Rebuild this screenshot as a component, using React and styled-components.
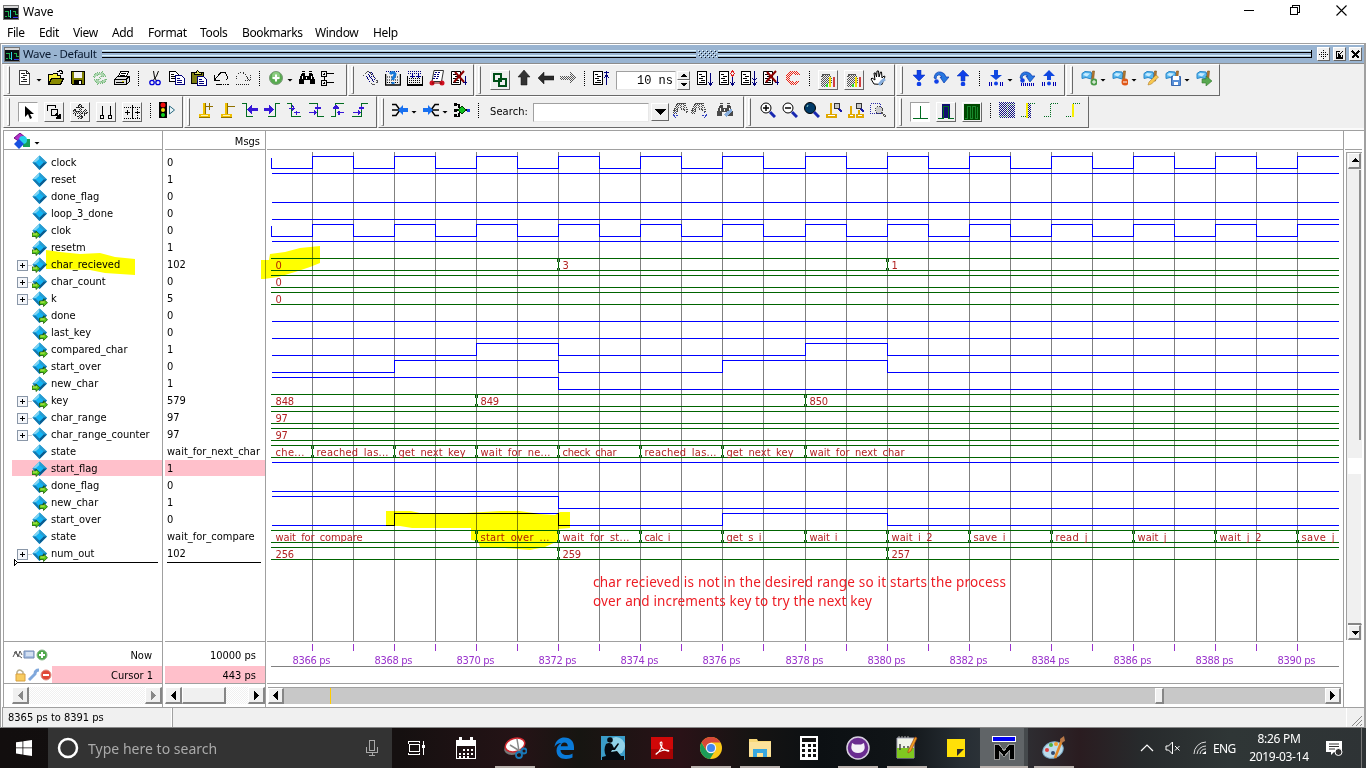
import React from "react";
import styled, { createGlobalStyle, css } from "styled-components";

const Global = createGlobalStyle`
  html, body { margin: 0; padding: 0; }
  body { width: 1366px; height: 768px; overflow: hidden; background: #f0f0f0; }
  *, *::before, *::after { box-sizing: border-box; }
  svg { display: block; flex: none; }
`;
const ui = `"Noto Sans", "Open Sans", sans-serif`;
const tahoma = `"DejaVu Sans Condensed", "DejaVu Sans", sans-serif`;

const Screen = styled.div`
  width: 1366px; height: 768px; display: flex; flex-direction: column; overflow: hidden;
  background: #fff; color: #000; font-family: ${tahoma}; font-stretch: condensed; font-size: 11px; white-space: nowrap;
`;
const Defs = styled.svg`position: absolute;`;
const TitleBar = styled.header`
  height: 23px; display: flex; align-items: center; padding: 0 19px 1px 3px; font: 12px ${ui};
  > svg { margin: 2px 4px 0 0; }
`;
const WinButtons = styled.div`
  margin-left: auto; display: flex; gap: 35px; align-items: center; padding-bottom: 2px;
`;
const MenuBar = styled.nav`
  height: 20px; display: flex; align-items: center; padding: 0 0 2px 7px; font: 12px ${ui};
`;
const MenuItem = styled.span`width: ${(p) => p.$w}px; letter-spacing: -0.35px;`;

const Frame = styled.main`
  height: 685px; display: flex; flex-direction: column; background: #fff;
  border: 1px solid #a0a0a0; border-bottom-color: #888; border-right-width: 2px;
`;
const PaneTitle = styled.div`
  height: 20px; border-top: 1px solid #fff; border-bottom: 1px solid #8c8c8c; margin-left: 1px;
  background: #99b4d1; display: flex; align-items: center; padding: 0 2px; font: 11.5px ${ui}; color: #0a1a30;
`;
const PaneName = styled.span`width: 79px; margin: 0 0 2px 3px; letter-spacing: -0.35px;`;
const Grooves = styled.div`
  flex: 1; height: 8px; margin-right: ${(p) => (p.$end ? 2 : 0)}px; border-right: ${(p) => (p.$end ? 1 : 0)}px solid #000;
  background: linear-gradient(#d9f2fb 0 1px, #a9c4de 1px 2px, #000 2px 3px, transparent 3px 5px, #d9f2fb 5px 6px, #a9c4de 6px 7px, #000 7px 8px);
`;
const GripBox = styled.div`width: 22px; padding-left: 2px;`;
const MiniButton = styled.span`
  width: 13px; height: 14px; margin-left: 3px; display: flex; align-items: center; justify-content: center;
  background: #f0f0f0; border: 1px solid #fff; border-right-color: #666; border-bottom-color: #666;
`;
const Toolbars = styled.div`
  height: 66px; background: #f0f0f0; border-bottom: 2px solid #fbfbfb; padding-left: 2px;
`;
const ToolRow = styled.div`display: flex; height: 32px;`;
const Group = styled.div`
  width: ${(p) => p.$w}px; margin-right: 1px; padding-left: ${(p) => p.$pad || 4}px; display: flex; align-items: center;
  border-left: 1px solid #fff; border-top: 1px solid #fff; border-right: 1px solid #696969; border-bottom: 1px solid #696969;
`;
const Handle = styled.i`
  width: 3px; height: 28px; margin-right: ${(p) => p.$gap}px;
  border-left: 1px solid #fff; border-top: 1px solid #fff; border-right: 1px solid #696969; border-bottom: 1px solid #a0a0a0;
`;
const Tool = styled.span`
  width: 22px; height: 30px; padding-bottom: 4px; display: flex; align-items: center; justify-content: center;
  margin-left: ${(p) => p.$ml || 0}px; flex: none;
`;
const ToolButton = styled.span`
  width: 20px; height: 20px; margin: 0 3px; display: flex; align-items: center; justify-content: center; flex: none;
  background: ${(p) => (p.$down ? "#fff" : "#f0f0f0")};
  border: 1px solid; border-color: ${(p) => (p.$down ? "#a0a0a0 #fff #fff #a0a0a0" : "#fff #696969 #696969 #fff")};
`;
const CaretBox = styled.i`
  width: 9px; height: 3px; flex: none;
  &::before { content: ""; display: block; width: 6px; height: 3px; background: #000; clip-path: polygon(0 0, 100% 0, 50% 100%); }
`;
const HeadCaret = styled(CaretBox)`margin: 4px 0 0 3px;`;
const Dots = styled.i`
  width: 11px; height: 16px; padding-left: 5px; margin-bottom: 2px; flex: none;
  &::before { content: ""; display: block; width: 1px; height: 16px; background: repeating-linear-gradient(#000 0 1px, transparent 1px 2px); }
`;
const Field = styled.div`
  width: ${(p) => p.$w}px; height: 19px; margin-left: 4px; background: #fff; border: 1px solid;
  border-color: #a0a0a0 #e8e8e8 #e8e8e8 #a0a0a0; font: 12px/18px "Liberation Mono", monospace; text-align: right; padding-right: 2px;
`;
const Spinner = styled.div`
  width: 13px; height: 19px; margin: 0 4px 0 1px; display: flex; flex-direction: column;
`;
const SpinHalf = styled.i`
  flex: 1; min-height: 0; overflow: hidden; display: flex; align-items: center; justify-content: center; background: #f0f0f0;
  border: 1px solid #fff; border-right-color: #696969; border-bottom-color: #696969;
`;
const SearchLabel = styled.span`width: 39px; margin: 0 0 2px 6px; letter-spacing: 0.1px;`;
const DropButton = styled.i`
  width: 18px; height: 18px; margin: 0 3px 0 2px; display: flex; align-items: center; justify-content: center;
  background: #f0f0f0; border: 1px solid #fff; border-right-color: #696969; border-bottom-color: #696969;
`;

const Body = styled.div`
  height: 577px; position: relative; display: flex; margin-left: 2px; border-left: 1px solid #a0a0a0; border-top: 1px solid #a0a0a0;
`;
const Column = styled.section`
  width: ${(p) => p.$w}px; display: flex; flex-direction: column; border-right: 1px solid #a0a0a0; margin-right: ${(p) => p.$mr ?? 2}px;
`;
const ColHead = styled.div`
  height: 19px; border-bottom: 1px solid #a0a0a0; display: flex; align-items: center;
  justify-content: ${(p) => (p.$right ? "flex-end" : "flex-start")}; padding: 2px 5px 0 9px;
`;
const List = styled.div`
  height: 492px; padding-top: 4px; border-bottom: 1px solid #a0a0a0;
`;
const WaveBox = styled.div`height: 492px; border-bottom: 1px solid #a0a0a0;`;
const RulerBox = styled.div`height: 42px; border-bottom: 1px solid #a0a0a0;`;
const Row = styled.div`
  height: 17px; display: flex; align-items: center; padding-left: ${(p) => p.$pl}px;
  ${(p) => p.$hot && css`background: linear-gradient(#ffc0cb, #ffc0cb) ${p.$from}px 0 / 200px 16px no-repeat;`}
`;
const Expander = styled.span`
  width: 15px; height: 12px; display: flex; align-items: center; margin-top: 2px;
  &::after { content: ""; flex: 1; height: 1px; background: #d0d0d0; }
`;
const SigName = styled.span`margin-left: 3px; padding-bottom: 1px;`;
const SigValue = styled.span`margin-left: 2px; padding-bottom: 1px;`;
const EndRule = styled.div`
  height: 1px; margin: ${(p) => p.$m}; background: #000; display: flex; align-items: center;
`;
const Foot = styled.div`
  height: 42px; border-bottom: 1px solid #a0a0a0; padding-top: 3px;
`;
const FootRow = styled.div`
  height: 20px; display: flex; align-items: center; padding: 0 ${(p) => p.$pr}px 0 8px;
  span { margin-left: auto; }
  ${(p) => p.$hot && css`background: linear-gradient(#ffc0cb, #ffc0cb) ${p.$from}px 1px / 200px 17px no-repeat;`}
`;
const HBar = styled.div`
  height: 17px; margin: 3px ${(p) => p.$mr || 0}px 0 ${(p) => p.$ml || 0}px; display: flex; align-items: stretch;
  background: ${(p) => p.$track || "conic-gradient(#fff 25%, #f0f0f0 0 50%, #fff 0 75%, #f0f0f0 0) 0 0 / 2px 2px"};
  border-top: ${(p) => (p.$track ? "1px solid #a0a0a0" : "0")};
`;
const ScrollKey = styled.i`
  width: ${(p) => p.$w || 16}px; height: ${(p) => p.$h || "auto"}; flex: none; background: #f0f0f0; border: 1px solid #fff; border-right: 2px solid #868686; border-bottom: 2px solid #868686;
  display: flex; align-items: center; justify-content: center; margin-left: ${(p) => p.$ml || 0};
`;
const Mark = styled.i`width: 1px; flex: none; background: #ffcc00; margin-left: 46px;`;
const VTrack = styled.div`
  width: 16px; height: 488px; margin: 2px 0 0 1px; display: flex; flex-direction: column; border-left: 1px solid #a0a0a0; border-top: 1px solid #a0a0a0;
  background: #f0f0f0; padding-left: 1px;
`;
const VFace = styled.i`
  height: ${(p) => p.$h}px; margin-top: ${(p) => p.$mt || 0}px; width: 13px; background: #f0f0f0; border-right: ${(p) => (p.$edge ? 2 : 0)}px solid #909090;
`;
const VNotch = styled.i`height: 16px; background: #fff;`;
const VFill = styled.i`flex: 1; background: #f0f0f0; border-bottom: 2px solid #868686; border-right: 1px solid #fff;`;
const Overlay = styled.svg`position: absolute; left: 0; top: 0; mix-blend-mode: multiply; pointer-events: none;`;
const Status = styled.footer`
  height: 20px; margin: 0 0 0 1px; background: #f0f0f0; border-top: 1px solid #a0a0a0; display: flex; align-items: stretch;
`;
const StatusCell = styled.div`
  width: ${(p) => p.$w}px; flex: none; padding-left: 5px; display: flex; align-items: center; border-left: 1px solid #a0a0a0; border-right: 1px solid #fff;
`;
const SizeGrip = styled.div`flex: 1; display: flex; align-items: flex-end; justify-content: flex-end; padding: 0 2px 1px 0;`;

const Taskbar = styled.footer`
  height: 40px; display: flex; align-items: stretch; color: #fff; margin-top: auto;
  background: linear-gradient(90deg, #120e0e 0, #151010 400px, #251316 520px, #161511 580px, #2a1217 680px, #161413 750px, #0c1013 820px, #101417 900px, #262d33 960px, #30363b 1000px, #2a1c20 1080px, #272a2c 1140px, #2f3636 1230px, #2e3335 1366px);
`;
const Start = styled.div`width: 48px; display: flex; align-items: center; justify-content: center;`;
const SearchBox = styled.div`
  width: 344px; background: #333; display: flex; align-items: center; padding: 0 14px 0 9px; font: 14px ${ui}; color: #aaa;
  span { margin-left: 9px; letter-spacing: 0.02px; } svg:last-child { margin-left: auto; }
`;
const TaskItem = styled.div`
  width: 49px; display: flex; align-items: center; justify-content: center; position: relative; flex: none;
  background: ${(p) => (p.$active ? "linear-gradient(90deg, #606467 44px, #45494c 44px)" : "none")};
  background-size: 48px 100%; background-repeat: no-repeat; padding-right: ${(p) => (p.$active ? 2 : 0)}px;
  &::after { content: ""; display: ${(p) => (p.$open ? "block" : "none")}; position: absolute; left: ${(p) => (p.$active ? 0 : 5)}px; width: ${(p) => (p.$active ? 48 : 40)}px; bottom: 0; height: 2px; background: #b8b0ac; }
`;
const Tray = styled.div`
  margin-left: auto; display: flex; align-items: center; font: 12px ${ui};
  > svg:first-child { margin-right: 3px; }
`;
const Lang = styled.span`width: 36px; margin-left: 7px; letter-spacing: -0.6px;`;
const Clock = styled.div`width: 60px; text-align: center; line-height: 18px; letter-spacing: -0.3px;`;
const Notes = styled.span`margin-left: 17px;`;
const PeekEdge = styled.i`width: 5px; height: 40px; margin-left: 18px; border-left: 1px solid #777;`;

/* ---------- icons ---------- */
const G = "#006c20", N = "#00007a";
const Svg = ({ w = 16, h = 16, vb, children, smooth }) => (
  <svg width={w} height={h} viewBox={vb || `0 0 ${w} ${h}`} fill="none" shapeRendering={smooth ? "auto" : "crispEdges"}>{children}</svg>
);
const page = <><path d="M2.500 .5h7l3 3v11h-10z" fill="#fff" stroke="#444" /><path d="M9.500 .5v3h3M4 3.500h4M6 5.500h4M4 7.500h4M6 9.500h4M4 11.500h6" stroke="#222" /></>;
const pageSmall = <><path d="M.5 1.500h9v13h-9z" fill="#fff" stroke="#000" /><path d="M2 4.500h3M4 6.500h4M2 8.500h4M4 10.500h4M2 12.500h6" stroke="#000" /></>;
const flag = <g><path d="M1 3.500l3-2 6 .5 1 3-1 4-5-1.500-4 1z" fill="#58b8f0" stroke="#2a86c8" /><path d="M2 5l2-2 5 .5-3 3z" fill="#c8ecff" /><path d="M11.500 1h2l-1 10h-2z" fill="#b87a30" stroke="#7a5018" strokeWidth=".6" /></g>;
const lens = (x = 0) => <g transform={`translate(${x} 0)`}><circle cx="9" cy="4" r="3" fill="#c8c8c8" stroke="#333" /><path d="M11 7l3 3" stroke="#1818a8" strokeWidth="2" /></g>;
const bars = <><path d="M1 6h7v9H1z" fill="url(#grey)" /><path d="M1 5l2-3h6l2 3v5H8V6H2z" fill="url(#grey)" stroke="#555" strokeDasharray="1 1" /><path d="M10 15V5" stroke="#f0e000" strokeWidth="2" /><path d="M13.500 15V5" stroke="#d04040" strokeWidth="2" /><path d="M7 15V12" stroke="#30e030" strokeWidth="2" /></>;
const bino = (c) => <><path d="M3 4h3v3h4V4h3l3 7v4h-5v-4H5v4H0v-4z" fill={c} transform="translate(0 -1)" /><path d="M3 1.500h3M10 1.500h3" stroke={c} /><path d="M3 6v3M12 6v3M7.500 7v2" stroke="#fff" /></>;
const greyBino = <><path d="M4 1h8l3 9h-3l-1-3H5l-1 4H0z" fill="url(#grey)" stroke="#444" strokeDasharray="1 1" /><path d="M6 3v6M9 3v6M12 4v5" stroke="#e8e8e8" /></>;
const cross = <path d="M4 2l9 10M13 1L3 12" stroke="#8c0000" strokeWidth="2" />;

const icons = {
  doc: page,
  folder: <><path d="M.5 14V4.500h4l1-1h4v2h3v3" fill="#f8f040" stroke="#000" /><path d="M.5 14.500l3-6h12l-3 6z" fill="#8a8a00" stroke="#000" /><path d="M9 1.500h2l1-1h1l1.500 2M14.500 .5v3h-3" stroke="#000" /></>,
  save: <><path d="M1.500 1.500h13v13h-12l-1-1z" fill="#808000" stroke="#000" /><path d="M4 2h8v6H4z" fill="#f4f4f4" /><path d="M4 10h8v4H4z" fill="#000" /><path d="M9 11h2v3H9z" fill="#fff" /></>,
  refresh: <g opacity=".8"><path d="M1 7q2-5 8-4l1-2 4 5-6 1 1-2q-4-1-5 2z" fill="#9cd0a0" stroke="#5aaa60" strokeDasharray="1 1" /><path d="M15 9q-2 5-8 4l-1 2-4-5 6-1-1 2q4 1 5-2z" fill="#9cd0a0" stroke="#5aaa60" strokeDasharray="1 1" /></g>,
  print: <><path d="M4.500 6.500l2-5h8l-2 5z" fill="#fff" stroke="#000" /><path d="M7 3.500h5M6 5.500h5" stroke="#000" /><path d="M.5 9.500l3-3h12v5l-3 3H.5z" fill="#ddd" stroke="#000" /><path d="M1 9.500h11v5M12 9.500l3-3M2 12.500h8" stroke="#000" /><path d="M8 11.500h2" stroke="#d8d000" /></>,
  cut: <><path d="M6.500 1l1 6 2 4M11.500 1l-2 5-3 4" stroke="#000" /><circle cx="5" cy="12.500" r="2.200" stroke="#0000d8" strokeWidth="1.300" /><circle cx="11" cy="12.500" r="2.200" stroke="#0000d8" strokeWidth="1.300" /></>,
  copy: <><path d="M.5 1.500h6l3 3v7h-9z" fill="#fff" stroke="#000" /><path d="M2 4.500h3M2 6.500h5M2 8.500h5" stroke="#000" /><path d="M6.500 5.500h6l3 3v6h-9z" fill="#fff" stroke={N} /><path d="M8 8.500h3M8 10.500h5M8 12.500h5" stroke={N} /></>,
  paste: <><path d="M.5 2.500h12v11H.5z" fill="#7c7c10" stroke="#000" /><path d="M3.500 4V2h2l1-1.500L8 2h2v2z" fill="#e0e060" stroke="#000" /><path d="M6.500 6.500h6l3 3v6h-9z" fill="#fff" stroke={N} /><path d="M8 9.500h3M8 11.500h5M8 13.500h5" stroke={N} /></>,
  undo: <><path d="M1 5v5.500h5.500M1.500 10L6 4.500q3-4 6.500-1.500 3 3 1 7.500" stroke="#000" /><path d="M3 14.500h13" stroke="#000" strokeDasharray="6 1 1 1 1 1" /></>,
  redo: <><path d="M15 5v5.500H9.500M14 10L10 4.500q-3-4-6.500-1.500-3 3-1 7.500" stroke="#333" strokeDasharray="1 1" /><path d="M1 14.500h14" stroke="#222" strokeDasharray="1 1" /></>,
  plus: <><circle cx="8" cy="8" r="6.500" fill="#58aa50" stroke="#7a9a78" /><circle cx="8" cy="6" r="4" fill="#8ccc80" /><path d="M8 4.500v7M4.500 8h7" stroke="#fff" strokeWidth="2" /></>,
  bino: bino("#000"),
  tree: <><path d="M.5 1.500h5v5h-5zM.5 10.500h5v5h-5zM3.500 6.500v4M6 3.500h7M6 12.500h7" stroke="#000" /><path d="M2 4h2M3 3v2M2 13h2M3 12v2" stroke="#000" /></>,
  log: <><path d="M0 6l5-5 5 4M10 5l5 7-5 3-4-4" stroke="#555" strokeDasharray="2 1" /><path d="M3 6l5 7M5 4l3 4M8 8l4 5M6 2l4 1-4 4 5-1 1 5" stroke={N} strokeDasharray="1 1" /></>,
  question: <><path d="M.5 4v11h15V4M1 15h15" stroke="#000" strokeWidth="1.500" /><path d="M2 7h12M2 10h12M2 12.500h12" stroke="#000" strokeDasharray="1 1" /><path d="M1 1.500h14" stroke={N} strokeDasharray="1 1" /><path d="M5 4q3-3 5 0 0 2-2 4v2M8 12v2" stroke="#1878d8" strokeWidth="3" /></>,
  down: <><path d="M.5 6v9h15V6" stroke="#000" strokeWidth="1.500" /><path d="M2 8.500h12M2 10.500h12M2 12.500h12" stroke="#000" strokeDasharray="1 1" /><path d="M1 1.500h14M1 3.500h14" stroke={N} strokeDasharray="1 1" /><path d="M5 3v5M11 3v5M3 6h5M9 6h5" stroke="#000090" /></>,
  chart: <><path d="M5 .5h9.500l-2 11H3z" fill="#fff" stroke="#333" /><path d="M6 2.500h6M5 4.500h6M5 6.500h6M4 8.500h6" stroke={N} strokeDasharray="2 1" /><circle cx="3" cy="13" r="2.500" fill="#d01020" /><circle cx="13" cy="13" r="2.500" fill="#d01020" /><path d="M3 13h10" stroke="#800" /></>,
  pageX: <>{pageSmall}<path d="M14.500 6v9M12 12.500h5" stroke={N} />{cross}</>,
  link: <path d="M2 2h7v7H2zM7 7h7v7H7z" stroke="#005018" strokeWidth="2" />,
  up: <path d="M8 0l6 7h-3v8H5V7H2z" fill="#333" stroke="#111" strokeWidth=".5" />,
  left: <path d="M0 8l6-6v4h10v4H6v4z" fill="#2a2a2a" stroke="#111" strokeWidth=".5" />,
  rightDim: <path d="M16 8l-6-6v4H0v4h10v4z" fill="url(#grey)" />,
  pageUp: <>{pageSmall}<path d="M13.500 1v14M11 2h5M11 8l2.500-3 2.500 3" stroke={N} /></>,
  pageDown: <>{pageSmall}<path d="M13.500 3v12M11 12l2.500 3 2.500-3" stroke={N} /></>,
  pageRed: <>{pageSmall}<path d="M13.500 5v10M11 12l2.500 3 2.500-3" stroke={N} /><path d="M13.500 1l2 2.500-2 2.500-2-2.500z" stroke="#e02020" /></>,
  pageAll: <>{pageSmall}<path d="M13.500 1v14M11 8l2.500 2 2.500-2M11 12l2.500 3 2.500-3" stroke={N} /></>,
  stop: <path d="M12 1l3 4h-4L9 4 6 5 5 8l1 3 3 1 2-1h4l-3 4H5l-4-4V5l4-4z" fill="url(#red)" />,
  bars,
  hand: <><path d="M4 14L1 9l1-1 3 2-1-7h1.500l1 4 .5-6h1.500l.5 6 1.500-5h1L12 8l2-2 1 .5-3 8z" fill="#fff" stroke="#000" /><path d="M9 15l3-4 3-2" stroke="#88aedc" strokeWidth="3" /></>,
  stepIn: <><path d="M6 0h4v5h4L8 11 2 5h4z" fill="#1040e8" stroke="#0830b0" strokeWidth=".5" /><circle cx="8" cy="14" r="2.300" fill="#1040e8" /></>,
  stepOver: <><path d="M1 8q1-7 7-6 4 1 5 5h3l-5 6-4-6h2Q7 4 5 5 3 6 3 9z" fill="#2878e0" stroke="#0838b0" strokeWidth=".7" /><circle cx="3.500" cy="11.500" r="2.300" fill="#1040e8" /></>,
  stepOut: <><path d="M6 11h4V6h4L8 0 2 6h4z" fill="#1040e8" stroke="#0830b0" strokeWidth=".5" /><circle cx="8" cy="14" r="2.300" fill="#1040e8" /></>,
  stepIn2: <><path d="M6 0h4v5h4L8 10 2 5h4z" fill="#1048e0" /><circle cx="8" cy="13.500" r="2" fill="#1040e8" /><path d="M1.500 12v4M3.500 12v4M12.500 12v4M14.500 12v4" stroke="#0000b0" /></>,
  stepOver2: <><path d="M1 8q1-7 7-6 4 1 5 4h3l-5 6-4-6h2Q7 4 5 5 3 6 3 9z" fill="#2878e0" stroke="#0838b0" strokeWidth=".7" /><circle cx="3.500" cy="10.500" r="2.300" fill="#1040e8" /><path d="M2 14.500h14" stroke="#0000b0" strokeWidth="3" strokeDasharray="1 1" /></>,
  stepOut2: <><path d="M6 10h4V6h4L8 0 2 6h4z" fill="#1048e0" /><circle cx="8" cy="13.500" r="2" fill="#1040e8" /><path d="M1.500 12v4M3.500 12v4M12.500 12v4M14.500 12v4" stroke="#0000b0" /></>,
  flagAdd: <>{flag}<circle cx="13" cy="12" r="3.500" fill="#4a9a48" /><path d="M13 10v4M11 12h4" stroke="#fff" /></>,
  flagDel: <>{flag}<circle cx="13" cy="12" r="3.500" fill="#e05818" /><path d="M11 12h4" stroke="#fff" /></>,
  flagEdit: <>{flag}<path d="M5 15l1-3 7-7 2.500 2-7 7z" fill="#f8c850" stroke="#b08030" strokeWidth=".6" /></>,
  flagSave: <>{flag}<path d="M6.500 6.500h9v9h-9z" fill="#5890d8" stroke="#3868b0" /><path d="M8 6h6v4H8zM9 12h4v3H9z" fill="#fff" /></>,
  flagGo: <>{flag}<path d="M6 9h4V6l6 5-6 5v-3H6z" fill="#58a850" stroke="#387830" strokeWidth=".6" /></>,
  pointer: <path d="M5 2v11l3-3 2 5 2-1-2-4h4z" fill="#000" />,
  edit: <><path d="M1.500 7V1.500h8V4" stroke="#000" strokeWidth="1.500" /><path d="M5.500 5.500h6v6h-6zM10 10l4 4M14 10v4h-4" stroke="#000" strokeWidth="1.500" /></>,
  move: <path d="M8 0l3 3.500H9v3.500h3.500V5L16 8l-3.500 3V9H9v3.500h2L8 16l-3-3.500h2V9H3.500v2L0 8l3.500-3v2H7V3.500H5z" fill="url(#grey)" stroke="#222" strokeDasharray="1 1" />,
  cursors: <path d="M4.500 2v9M12.500 2v9M2.500 11.500h3v3h-3zM10.500 11.500h3v3h-3z" stroke="#000" />,
  stretch: <><path d="M8.500 1v14" stroke="#000" /><path d="M0 3.500h8M0 14.500h8M9 3.500h7M9 14.500h7M13.500 3v12" stroke="#000" strokeDasharray="1 1" /><path d="M1 8.500h5M3.500 6v5M11 8.500h5" stroke="#000" /></>,
  traffic: <><path d="M0 0h8v16H0z" fill="#000" /><circle cx="4" cy="3" r="2.500" fill="#f01010" /><circle cx="4" cy="8" r="2" fill="#f0e010" /><circle cx="4" cy="13" r="2" fill="#10d020" /><path d="M10.500 4v8l5-4z" stroke="#2a6a80" fill="#e8f4f8" /></>,
  curAdd: <><path d="M5 1h2v11h5v4H1v-4h4z" fill="#f0c000" /><path d="M3 13h7v1H3z" fill="#fff4b0" /><path d="M7.500 1v11M1 15.500h11" stroke="#907000" /><path d="M8 4.500h7M11.500 1v7" stroke="#907000" /></>,
  curDel: <><path d="M5 1h2v11h5v4H1v-4h4z" fill="#f0c000" /><path d="M3 13h7v1H3z" fill="#fff4b0" /><path d="M7.500 1v11M1 15.500h11" stroke="#907000" /><path d="M8 4.500h7" stroke="#907000" /></>,
  ePrev: <><path d="M0 1.500h4.500v13H11" stroke={G} /><path d="M5 7.500l5-4.500v3h6v3h-6v3z" fill="#3818d8" /></>,
  eNext: <><path d="M4 14.500h7.500V1.500H16" stroke={G} /><path d="M10 7.500L5 3v3H0v3h5v3z" fill="#3818d8" /></>,
  fPrev: <><path d="M1 1.500h4.500v13H15" stroke={G} /><path d="M3 6h6M6 3l2 3-2 3M8 10.500h6M10 8.500v4" stroke="#3818d8" /></>,
  fNext: <><path d="M1 1.500h8.500v13H16" stroke={G} /><path d="M1 10.500h7M6 8l2 2.500-2 2.500M9.500 3v5M7 6h6" stroke="#3818d8" strokeWidth="1.200" /></>,
  rPrev: <><path d="M1 14.500h4.500V1.500H14" stroke={G} /><path d="M3 6h6M4 6l2-3 2 3M7 10.500h7M9 8.500v4" stroke="#3818d8" strokeWidth="1.200" /></>,
  rNext: <><path d="M0 14.500h9.500V1.500H16" stroke={G} /><path d="M1 10.500h7M6 8l2 2.500-2 2.500M7 6h5M9.500 4v4" stroke="#3818d8" strokeWidth="1.200" /></>,
  merge: <><path d="M0 2.500h4l4 5.500-4 5.500H0M0 8h8" stroke="#000" strokeWidth="1.500" /><path d="M6 8l5-5v3h5v4h-5v3z" fill="#1870f0" /></>,
  split: <><path d="M16 2.500h-4L8 8l4 5.500h4M8 8h8" stroke="#000" strokeWidth="1.500" /><path d="M10 8L5 3v3H0v4h5v3z" fill="#1870f0" /></>,
  node: <><path d="M1 2.500h4v3l3 3-3 3v3H1M1 8h5M8 8h7" stroke="#000" strokeWidth="1.200" /><path d="M0 1h3v3H0zM0 6.500h3v3H0zM0 12h3v3H0z" fill="#000" /><path d="M8 4l4 4-4 4-4-4z" fill="#10c020" stroke="#003800" /><path d="M13 6.500h3v3h-3z" fill="#2040e0" /></>,
  findPrev: <>{greyBino}<path d="M0 13h5M3 10l-3 3 3 3" stroke="#3040c0" strokeDasharray="2 1" /></>,
  findNext: <>{greyBino}<path d="M11 13h5M13 10l3 3-3 3" stroke="#3040c0" strokeDasharray="2 1" /></>,
  findOpt: <>{bino("#4a4a4a")}<path d="M8 14l4-4 3-2" stroke="#88aedc" strokeWidth="3" /></>,
  zoomIn: <><circle cx="6" cy="6" r="5" fill="#fff" stroke="#000" /><path d="M3 6h6M6 3v6" stroke="#000" strokeWidth="1.500" /><path d="M10 10l5 5" stroke="#1828b0" strokeWidth="3" /></>,
  zoomOut: <><circle cx="6" cy="6" r="5" fill="#fff" stroke="#000" /><path d="M3 6h6" stroke="#000" strokeWidth="1.500" /><path d="M10 10l5 5" stroke="#1828b0" strokeWidth="3" /></>,
  zoomFull: <><circle cx="6" cy="6" r="5.500" fill="#003a68" stroke="#000" /><path d="M4 3l-1 2" stroke="#8cc" /><path d="M10 10l5 5" stroke="#1828b0" strokeWidth="3" /></>,
  zoomCur: <><path d="M4 1h2v11h5v4H0v-4h4z" fill="#e0a800" /><path d="M2 13.500h7" stroke="#fff" />{lens(2)}</>,
  zoomTwo: <><path d="M2 4h2v8h3v4H0v-4h2zM10 8h2v4h4v4H8v-4h2z" fill="#e0a800" /><path d="M2 13.500h3M10 13.500h4" stroke="#fff" />{lens(2)}</>,
  zoomArea: <><path d="M.5 1.500h10v10H.5z" stroke="#2828a8" strokeDasharray="1 1" /><circle cx="9" cy="8" r="3.500" fill="#ccc" stroke="#444" strokeDasharray="1 1" /><path d="M12 11l4 4" stroke="#555" strokeWidth="2" strokeDasharray="1 1" /></>,
  wOne: <path d="M1 14.500h15M8.500 14V2" stroke={G} />,
  wTwo: <><path d="M4 0h8v14H4z" fill="#101070" /><path d="M0 14.500h5.500V2.500h5v12H16" stroke={G} /></>,
  wThree: <><path d="M0 0h16v16H0z" fill="#004800" /><path d="M1 14.500h2.500V2.500h3v12h2V2.500h3v12h2V2.500" stroke="#18882c" /></>,
  hatch: <><rect width="16" height="16" fill="url(#chk)" /><path d="M0 14.500h8V2h8" stroke="#408060" strokeDasharray="1 1" /></>,
  hatchY: <><rect x="6" y="1" width="4" height="15" fill="url(#chk)" /><path d="M5.500 1v15" stroke="#f8f000" strokeWidth="2" /><path d="M0 14.500h5M9 1.500h6" stroke={G} strokeDasharray="1 1" /></>,
  edgeG: <path d="M1 14.500h6.500V1.500H15" stroke={G} strokeDasharray="1 1" />,
  edgeY: <><path d="M7.500 2v13" stroke="#f8f000" strokeWidth="2" /><path d="M1 14.500h6M8 1.500h7" stroke={G} strokeDasharray="1 1" /></>,
};
const smoothSet = new Set(["plus", "up", "left", "stepIn", "stepOver", "stepOut", "stepIn2", "stepOver2", "stepOut2", "flagAdd", "flagDel", "flagEdit", "flagSave", "flagGo", "hand", "question", "cut", "traffic", "merge", "split", "zoomIn", "zoomOut", "zoomFull", "pageX", "chart", "pointer"]);
const Ic = ({ n }) => <Svg smooth={smoothSet.has(n)}>{icons[n]}</Svg>;

/* "v" is a menu caret, "|" a dotted divider, "[x" a raised button, "(x" a pressed one */
const Items = ({ list }) => list.split(" ").map((t, i) => {
  if (t === "v") return <CaretBox key={i} />;
  if (t === "|") return <Dots key={i} />;
  if (t[0] === "[" || t[0] === "(") return <ToolButton key={i} $down={t[0] === "("}><Ic n={t.slice(1)} /></ToolButton>;
  return <Tool key={i}><Ic n={t} /></Tool>;
});

const AppIcon = () => (
  <Svg w={16} h={15}>
    <path d="M.5 .5h15v14H.5z" fill="#0a0f14" stroke="#777" /><path d="M1 1h14v2H1z" fill="#d8d8d8" />
    <path d="M2 6.500h3v5h3M2 11.500h2M10 6.500h2v3h3" stroke="#20b050" /><path d="M7.500 5v8" stroke="#30d8e8" /><path d="M10 12.500h5" stroke="#3838f0" />
  </Svg>
);
const Tri = ({ d, c = "#000", s = 9 }) => (
  <Svg w={s} h={s} vb="0 0 9 9"><path d={{ l: "M7 0v9L2 4.500z", r: "M2 0v9l5-4.500z", u: "M1 6h8L5 2z", d: "M1 3h8L5 7z" }[d]} fill={c} /></Svg>
);
const Diamond = ({ dir }) => (
  <Svg w={16} h={16} smooth>
    <path d="M7.500 .5L15 7.500 7.500 15 .5 7.500z" fill="#18a0dc" />
    <path d="M7.500 .5L.5 7.500h3.500l3.500-3.500z" fill="#7ed4f4" /><path d="M7.500 .5L15 7.500h-3.500L7.500 4z" fill="#2a9cd0" />
    <path d="M15 7.500L7.500 15v-3.500l4-4z" fill="#0a5c90" /><path d="M.5 7.500L7.500 15v-3.500L4 7.500z" fill="#1478b0" />
    <path d="M7.500 4L11.500 7.500l-4 4-4-4z" fill="#12b4f4" />
    {dir && <g transform={dir === "in" ? "translate(0 0)" : "translate(7.500 0)"}><path d="M0 10h4V8l4 3.700-4 3.800v-2H0z" fill="#58c818" stroke="#1c5c08" strokeWidth=".8" /><path d="M1 11h4" stroke="#d8f060" /></g>}
  </Svg>
);
const PlusBox = () => (
  <Svg w={11} h={11}><rect x=".5" y=".5" width="10" height="10" rx="1" fill="#f4f6fa" stroke="#8a97a8" /><path d="M3 5.500h5M5.500 3v5" stroke="#000" /></Svg>
);

/* ---------- signals ---------- */
const LO = 0, HI = 1;
const signals = [
  ["clock", "0", "", 0, "clk"],
  ["reset", "1", "", 0, [[271, HI]]],
  ["done_flag", "0", "", 0, [[271, LO]]],
  ["loop_3_done", "0", "", 0, [[271, LO]]],
  ["clok", "0", "in", 0, "clk"],
  ["resetm", "1", "in", 0, [[271, HI]]],
  ["char_recieved", "102", "in", 1, [[271, "0"], [558, "3"], [887, "1"]]],
  ["char_count", "0", "in", 1, [[271, "0"]]],
  ["k", "5", "out", 1, [[271, "0"]]],
  ["done", "0", "out", 0, [[271, LO]]],
  ["last_key", "0", "out", 0, [[271, LO]]],
  ["compared_char", "1", "out", 0, [[271, LO], [476, HI], [558, LO], [805, HI], [887, LO]]],
  ["start_over", "0", "out", 0, [[271, LO], [394, HI], [558, LO], [722, HI], [887, LO]]],
  ["new_char", "1", "in", 0, [[271, HI], [558, LO]]],
  ["key", "579", "out", 1, [[271, "848"], [476, "849"], [805, "850"]]],
  ["char_range", "97", "", 1, [[271, "97"]]],
  ["char_range_counter", "97", "", 1, [[271, "97"]]],
  ["state", "wait_for_next_char", "", 0, [[271, "che...", 29], [312, "reached las...", 72], [394, "get next key", 67], [476, "wait for ne...", 70], [558, "check char", 54], [640, "reached las...", 72], [722, "get next key", 67], [805, "wait for next char", 95]]],
  ["start_flag", "1", "in", 0, [[271, HI]]],
  ["done_flag", "0", "out", 0, [[271, LO]]],
  ["new_char", "1", "out", 0, [[271, HI], [558, LO]]],
  ["start_over", "0", "in", 0, [[271, LO], [394, HI], [558, LO], [722, HI], [887, LO]]],
  ["state", "wait_for_compare", "", 0, [[271, "wait for compare", 87], [476, "start over ...", 69], [558, "wait for st...", 67], [640, "calc i", 26], [722, "get s i", 35], [805, "wait i", 28], [887, "wait i 2", 41], [969, "save i", 32], [1051, "read j", 32], [1133, "wait j", 29], [1215, "wait j 2", 42], [1297, "save j", 33]]],
  ["num_out", "102", "out", 1, [[271, "256"], [558, "259"], [887, "257"]]],
];
const grid = Array.from({ length: 25 }, (_, n) => 312 + 41 * n + (n > 11 ? 1 : 0));
const END = 1339, OX = 267, OY = 150;
const clk = [[271, LO], ...grid.map((x, n) => [x, n % 2 ? LO : HI])];
const chartFont = { fontFamily: "DejaVu Sans Condensed, DejaVu Sans", fontSize: "11" };

const Trace = ({ i, w }) => {
  const hi = 156.5 + 17 * i, lo = hi + 12;
  const steps = w === "clk" ? clk : w;
  if (typeof steps[0][1] === "string") {
    return (
      <g>
        <path d={`M271 ${hi}H${END}M271 ${lo}H${END}`} stroke="#006400" />
        {steps.slice(1).map(([x]) => (
          <path key={x} stroke="#006400" d={`M${x - 0.5} ${hi}v3M${x - 0.5} ${lo}v-3M${x + 1.5} ${hi}v3M${x + 1.5} ${lo}v-3M${x + 0.5} ${hi + 3}v6`} />
        ))}
        {steps.map(([x, s, len]) => (
          <text key={x} x={x + 4.5} y={lo - 1.5} fill="#b22222" wordSpacing="2.200" textLength={len || s.length * 6.2} lengthAdjust="spacing">{s}</text>
        ))}
      </g>
    );
  }
  const y = (v) => (v ? hi : lo);
  let d = w === "clk" ? `M271.500 ${hi + 1}V${lo}` : `M272 ${y(steps[0][1])}`;
  steps.slice(1).forEach(([x, v]) => { d += `H${x + 0.5}V${y(v)}`; });
  return <path d={d + `H${END}`} stroke="#0000ff" />;
};

const Wave = () => (
  <svg width={1076} height={491} viewBox={`${OX} ${OY} 1076 491`} fill="none" shapeRendering="crispEdges" {...chartFont}>
    <path d={grid.map((x) => `M${x + 0.5} 152V641`).join("")} stroke="#808080" />
    {signals.map((s, i) => <Trace key={i} i={i} w={s[4]} />)}
    <g fill="#ed1c24" fontFamily="Noto Sans, Open Sans" fontSize="13.500">
      <text x="593" y="587" textLength="413">char recieved is not in the desired range so it starts the process</text>
      <text x="593" y="606" textLength="279">over and increments key to try the next key</text>
    </g>
  </svg>
);
const Ruler = () => (
  <svg width={1076} height={41} viewBox="267 642 1076 41" fill="none" shapeRendering="crispEdges" {...chartFont}>
    <path d={grid.map((x) => `M${x + 0.5} 644v7`).join("")} stroke="#9932cc" />
    <path d="M271 666.500H1339" stroke="#808080" />
    {grid.filter((_, n) => n % 2 === 0).map((x, k) => (
      <text key={x} x={x - 19.5} y="664" fill="#9932cc" textLength="38">{8366 + 2 * k} ps</text>
    ))}
  </svg>
);

export default function App() {
  return (
    <Screen>
      <Global />
      <Defs width="0" height="0">
        <defs>
          <pattern id="chk" width="2" height="2" patternUnits="userSpaceOnUse"><path d="M0 0h1v1H0zM1 1h1v1H1z" fill="#101080" shapeRendering="crispEdges" /></pattern>
          <pattern id="grey" width="2" height="2" patternUnits="userSpaceOnUse"><path d="M0 0h1v1H0zM1 1h1v1H1z" fill="#555" shapeRendering="crispEdges" /></pattern>
          <pattern id="red" width="2" height="2" patternUnits="userSpaceOnUse"><path d="M0 0h1v1H0zM1 1h1v1H1z" fill="#f02010" shapeRendering="crispEdges" /></pattern>
          <pattern id="grip" width="4" height="4" patternUnits="userSpaceOnUse"><path d="M0 0h1v1H0zM2 2h1v1H2z" fill="#e4f6fc" /><path d="M1 1h1v1H1zM3 3h1v1H3z" fill="#101820" /></pattern>
        </defs>
      </Defs>
      <TitleBar>
        <AppIcon /><span>Wave</span>
        <WinButtons>
          <Svg w={11} h={11}><path d="M0 5.500h10" stroke="#000" /></Svg>
          <Svg w={11} h={11}><path d="M.5 2.500h7v7h-7zM2.500 2V.5h7v7H8" stroke="#000" /></Svg>
          <Svg w={11} h={11} smooth><path d="M.5 .5l10 10M10.500 .5l-10 10" stroke="#000" strokeWidth="1.100" /></Svg>
        </WinButtons>
      </TitleBar>
      <MenuBar>
        {[["File", 32], ["Edit", 34], ["View", 39], ["Add", 36], ["Format", 52], ["Tools", 42], ["Bookmarks", 73], ["Window", 58], ["Help", 40]].map(([t, w]) => <MenuItem key={t} $w={w}>{t}</MenuItem>)}
      </MenuBar>
      <Frame>
        <PaneTitle>
          <AppIcon /><PaneName>Wave - Default</PaneName>
          <Grooves /><GripBox><Svg w={19} h={8}><rect width="19" height="8" fill="url(#grip)" /></Svg></GripBox><Grooves $end />
          <MiniButton><Svg w={9} h={9}><path d="M4.500 0v9M0 4.500h9M2.500 2v5M6.500 2v5" stroke="#000" strokeDasharray="1 1" /></Svg></MiniButton>
          <MiniButton><Svg w={9} h={9}><path d="M1 1.500h4M1.500 1v7h6V5M8 1L4 5M3.500 3v3H6" stroke="#000" strokeWidth="1.300" /></Svg></MiniButton>
          <MiniButton><Svg w={9} h={9}><path d="M1 1l7 7M8 1L1 8" stroke="#000" strokeWidth="1.600" /></Svg></MiniButton>
        </PaneTitle>
        <Toolbars>
          <ToolRow>
            <Group $w={344} $pad={3}><Handle $gap={4} /><Items list="doc v folder save refresh print | cut copy paste undo redo | plus v bino tree" /></Group>
            <Group $w={126} $pad={2}><Handle $gap={6} /><Items list="log question down chart pageX" /></Group>
            <Group $w={420} $pad={2}><Handle $gap={6} /><Items list="[link up left rightDim | pageUp" />
              <Field $w={60}>10 ns</Field>
              <Spinner><SpinHalf><Tri d="u" s={7} /></SpinHalf><SpinHalf><Tri d="d" s={7} /></SpinHalf></Spinner>
              <Items list="pageDown pageRed pageAll pageX stop | [bars [bars hand" />
            </Group>
            <Group $w={169} $pad={3}><Handle $gap={5} /><Items list="stepIn stepOver stepOut | stepIn2 v stepOver2 stepOut2" /></Group>
            <Group $w={154} $pad={3}><Handle $gap={5} /><Items list="flagAdd v flagDel v flagEdit flagSave v flagGo" /></Group>
          </ToolRow>
          <ToolRow>
            <Group $w={180} $pad={3}><Handle $gap={5} /><Items list="(pointer [edit [move [cursors [stretch | traffic" /></Group>
            <Group $w={193} $pad={2}><Handle $gap={5} /><Items list="curAdd curDel ePrev eNext fPrev fNext rPrev rNext" /></Group>
            <Group $w={366} $pad={2}><Handle $gap={5} /><Items list="merge v split v node |" />
              <SearchLabel>Search:</SearchLabel><Field $w={116} /><DropButton><Svg w={12} h={6}><path d="M0 0h12L6 6z" fill="#000" /></Svg></DropButton>
              <Tool $ml={-2}><Ic n="findPrev" /></Tool><Tool $ml={-4}><Ic n="findNext" /></Tool><Tool $ml={4}><Ic n="findOpt" /></Tool>
            </Group>
            <Group $w={150} $pad={2}><Handle $gap={6} /><Items list="zoomIn zoomOut zoomFull zoomCur zoomTwo zoomArea" /></Group>
            <Group $w={193} $pad={2}><Handle $gap={5} /><Items list="(wOne [wTwo [wThree | hatch hatchY edgeG edgeY" /></Group>
          </ToolRow>
        </Toolbars>
        <Body>
          <Column $w={159}>
            <ColHead>
              <Svg w={18} h={16} smooth><path d="M7 0l6 5-6 4-6-4z" fill="#b030c8" stroke="#701080" /><path d="M10 6h7v8h-7z" fill="#18a058" /><circle cx="10" cy="7" r="4" fill="#28d0e8" /><path d="M6 6l5 5-5 5-5-5z" fill="#1850e0" /></Svg>
              <HeadCaret />
            </ColHead>
            <List>
              {signals.map(([name, , dir, exp], i) => (
                <Row key={i} $pl={exp ? 13 : 28} $hot={i === 18} $from={8}>
                  {exp ? <Expander><PlusBox /></Expander> : null}<Diamond dir={dir} /><SigName>{name}</SigName>
                </Row>
              ))}
              <EndRule $m="0 4px 0 10px"><Svg w={5} h={7}><path d="M.5 .5v6l3-3z" fill="#fff" stroke="#000" /></Svg></EndRule>
            </List>
            <Foot>
              <FootRow $pr={10}>
                <Svg w={36} h={14} smooth><path d="M1 9l3-6 2 6 2-6 2 4M2 4l8 6" stroke="#555" /><path d="M12 3h10v7H12z" fill="#a8c0e4" stroke="#7088b0" /><path d="M14 5h7M14 7h7" stroke="#fff" /><circle cx="30" cy="7" r="5" fill="#4ca848" stroke="#88b888" /><path d="M30 4v6M27 7h6" stroke="#fff" strokeWidth="2" /></Svg>
                <span>Now</span>
              </FootRow>
              <FootRow $pr={9} $hot $from={48}>
                <Svg w={40} h={14} smooth><path d="M5 6V4q2-4 6 0v2" stroke="#b8b090" strokeWidth="1.500" /><path d="M4 6h9v7H4z" fill="#f8cc60" stroke="#d8a040" /><path d="M17 12l6-6q0-4 4-4" stroke="#80a8dc" strokeWidth="3" /><circle cx="34" cy="7" r="5" fill="#e04838" stroke="#e09088" /><path d="M31 7h6" stroke="#fff" strokeWidth="2" /></Svg>
                <span>Cursor 1</span>
              </FootRow>
            </Foot>
            <HBar $ml={8}><ScrollKey $w={17}><Tri d="l" c="#888" /></ScrollKey><ScrollKey $w={17} $ml="auto"><Tri d="r" c="#888" /></ScrollKey></HBar>
          </Column>
          <Column $w={101} $mr={1}>
            <ColHead $right>Msgs</ColHead>
            <List>
              {signals.map(([, v], i) => <Row key={i} $pl={0} $hot={i === 18} $from={0}><SigValue>{v}</SigValue></Row>)}
              <EndRule $m="0 4px 0 2px" />
            </List>
            <Foot><FootRow $pr={9}><span>10000 ps</span></FootRow><FootRow $pr={9} $hot $from={0}><span>443 ps</span></FootRow></Foot>
            <HBar><ScrollKey $w={17}><Tri d="l" /></ScrollKey><ScrollKey $w={44} /><ScrollKey $w={17} $ml="auto"><Tri d="r" /></ScrollKey></HBar>
          </Column>
          <Column $w={1077} $mr={1}>
            <ColHead />
            <WaveBox><Wave /></WaveBox>
            <RulerBox><Ruler /></RulerBox>
            <HBar $ml={1} $mr={2} $track="#c8c8c8"><ScrollKey $w={16}><Tri d="l" /></ScrollKey><Mark /><ScrollKey $w={9} $ml="824px" /><ScrollKey $w={16} $ml="auto"><Tri d="r" /></ScrollKey></HBar>
          </Column>
          <div>
            <ColHead />
            <VTrack><ScrollKey $h="16px" $w={13}><Tri d="u" /></ScrollKey><VFace $h={270} $mt={1} $edge /><VFace $h={18} /><VNotch /><VFill /><ScrollKey $h="15px" $w={13}><Tri d="d" /></ScrollKey></VTrack>
          </div>
          <Overlay width="1358" height="576" viewBox="4 131 1358 576">
            <path fill="#ff0" d="M46 250l14 2 20 2 20-1 15 4 20 2v16l-15-1-15-1-15-3-44-1z" />
            <path fill="#ff0" d="M261 260h8l1-6 15-2 15-4 20-2v17l-10 4-15 5-17 5-14 2h-3z" />
            <path fill="#ff0" d="M386 511h25l9 2h46l34-2h20l20 3 15 1 5-3h10v16l-12 1v12l-13 6-15 3-25-2-25-1-2-6-7-1v-12h-59l-12-2h-14z" />
          </Overlay>
        </Body>
        <Status>
          <StatusCell $w={170}>8365 ps to 8391 ps</StatusCell><StatusCell $w={1175} />
          <SizeGrip><Svg w={10} h={10} smooth><path d="M0 10L10 0M4 10l6-6M8 10l2-2" stroke="#888" /></Svg></SizeGrip>
        </Status>
      </Frame>
      <Taskbar>
        <Start><Svg w={16} h={16} smooth><path d="M0 2.300l6.500-.9v6.100H0zM7.300 1.300L16 0v7.500H7.300zM0 8.300h6.500v6.200L0 13.600zM7.300 8.300H16V16l-8.700-1.300z" fill="#fff" /></Svg></Start>
        <SearchBox>
          <Svg w={22} h={22} smooth><circle cx="11" cy="11" r="9" stroke="#fff" strokeWidth="2.500" /></Svg>
          <span>Type here to search</span>
          <Svg w={12} h={18}><path d="M3.500 1.500h5v10h-5zM.5 8v5.500h11V8M6 13.500V17M3 16.500h6" stroke="#aaa" /></Svg>
        </SearchBox>
        <TaskItem><Svg w={18} h={16}><path d="M1.500 4.500h10v7h-10zM.5 1v2.500M11.500 1v2M.5 1.500h11M.5 15v-2M11.500 15v-2M.5 14.500h11M15.500 1v14" stroke="#fff" /><path d="M14 5h3v3h-3z" fill="#fff" /></Svg></TaskItem>
        <TaskItem><Svg w={20} h={24}><path d="M.5 5.500h19v17H.5z" stroke="#fff" /><path d="M0 4h20v6H0zM3 1h3v4H3zM14 1h3v4h-3z" fill="#fff" /><path d="M7 14h11M3 17.500h14M3 20.500h11" stroke="#fff" strokeWidth="2" strokeDasharray="2 2" /></Svg></TaskItem>
        <TaskItem $open><Svg w={24} h={24} smooth><ellipse cx="11" cy="12" rx="10" ry="6.500" fill="#777" transform="rotate(-18 11 12)" /><ellipse cx="12" cy="9" rx="10" ry="6.500" fill="#fff" stroke="#d02830" strokeWidth="1.500" transform="rotate(-18 12 9)" /><path d="M14 3l2 12M7 9l13 8" stroke="#888" strokeWidth="1.500" /><circle cx="16" cy="19" r="3" stroke="#1878b8" strokeWidth="1.800" /><circle cx="21" cy="15" r="2.500" stroke="#1878b8" strokeWidth="1.800" /></Svg></TaskItem>
        <TaskItem><Svg w={20} h={22} smooth><path d="M.5 10C1.500 3 6 .500 10.500 .500 17 .500 20 5 20 10v3H6.500c0 3 3 5 6 5 2.500 0 4.500-.7 6-1.600v4.200C17 21.500 14.500 22 12 22 6 22 2.500 18.500 2.500 13.500 2.500 10 4.500 7.500 7.500 6 4.500 6 2 7.500 .5 10zM6.800 9.300h7C13.800 7 12.500 5.500 10.500 5.500S7 7 6.800 9.300z" fill="#0a7ad8" /></Svg></TaskItem>
        <TaskItem><Svg w={24} h={24} smooth><rect width="24" height="24" fill="#3a9cc8" /><circle cx="15" cy="10" r="9" fill="#a8e0f0" opacity=".8" /><circle cx="9" cy="4" r="2.800" fill="#050a10" /><path d="M5 8q3-2 6 0l2 4 4-5 1 1-4 6h-3l-1 2 6-1 4 5h3v4H1v-3l4-1q-3-6 0-12z" fill="#050a10" /></Svg></TaskItem>
        <TaskItem><Svg w={22} h={22} smooth><rect width="22" height="22" fill="#d00808" /><path d="M0 12h22v10H0z" fill="#a80404" /><path d="M10.500 5q-2 0-1 3 2 5 7 6 2 .5 1-.5-2-1-6 0-4 1-6 3-1 1 0 .5 3-2 5-7 1-4 0-5z" stroke="#fff" strokeWidth="1.100" /></Svg></TaskItem>
        <TaskItem $open><Svg w={22} h={22} smooth><circle cx="11" cy="11" r="11" fill="#fbc818" /><path d="M1.500 5.500A11 11 0 0 0 10 22l5.500-9-9.500 0z" fill="#1c9c58" /><path d="M11 5.500h9.600a11 11 0 0 0-19-.2L6 13z" fill="#d84838" /><circle cx="11" cy="11" r="5.200" fill="#f4f4f4" /><circle cx="11" cy="11" r="4" fill="#4488f0" /></Svg></TaskItem>
        <TaskItem $open><Svg w={22} h={20} smooth><path d="M0 1h8l1 2h13v16H0z" fill="#f8d878" /><path d="M0 4h22v14H0z" fill="#fce29a" /><path d="M4 11h14v8h-4v-4H8v4H4z" fill="#38a8e0" /></Svg></TaskItem>
        <TaskItem><Svg w={18} h={24}><path d="M0 0h18v24H0z" fill="#fff" /><path d="M2 2h14v4H2z" fill="#111" /><path d="M2 9.500h14M2 14.500h14M2 19.500h14" stroke="#111" strokeWidth="3" strokeDasharray="3 2.500" /></Svg></TaskItem>
        <TaskItem $open><Svg w={24} h={24} smooth><circle cx="12" cy="12" r="11" fill="#6a2c90" stroke="#d8d0e0" strokeWidth="1.500" /><path d="M6 7l3 1.500h6L18 7q1 4 .500 6-1.500 4-6.500 4t-6.500-4Q5 11 6 7z" fill="#f4f0f8" /></Svg></TaskItem>
        <TaskItem $open><Svg w={24} h={24} smooth><path d="M2 2h17v20H2z" fill="#f0f4e8" stroke="#aab" /><path d="M2 12h17v10H2z" fill="#80c820" /><path d="M5 8v6M8 11h2M12 11h2" stroke="#444" strokeWidth="1.500" /><path d="M13 15l7-14 2 1-6 13-3 2z" fill="#f0a020" stroke="#a04818" strokeWidth=".7" /><path d="M4 2V0M7 2V0M10 2V0M13 2V0" stroke="#aaa" /></Svg></TaskItem>
        <TaskItem><Svg w={18} h={18} smooth><path d="M0 0h18v18H0z" fill="#ffe008" /><path d="M10 17v-7h7z" fill="#2a2a2a" /></Svg></TaskItem>
        <TaskItem $open $active><Svg w={24} h={24}><path d="M0 0h24v6H0z" fill="#fff" /><path d="M1 1h22v4H1z" fill="#0000f0" /><path d="M2 23V8h5l5 7 5-7h5v15h-5v-8l-5 6-5-6v8z" fill="#000" stroke="#999" /></Svg></TaskItem>
        <TaskItem $open><Svg w={24} h={24} smooth><ellipse cx="11" cy="14" rx="10.500" ry="8" fill="#bcdcec" stroke="#7aa8c4" transform="rotate(-20 11 14)" /><circle cx="5" cy="14" r="2" fill="#e04040" /><circle cx="9" cy="9" r="2" fill="#50b040" /><circle cx="14" cy="8" r="2" fill="#f0a030" /><circle cx="11" cy="17" r="2" fill="#304870" /><path d="M13 22l7-18" stroke="#e08828" strokeWidth="2.500" /><path d="M18 3l4-3 1 5-4 2z" fill="#b87848" /></Svg></TaskItem>
        <Tray>
          <Svg w={14} h={10} smooth><path d="M1 8l6-6 6 6" stroke="#fff" strokeWidth="1.200" /></Svg>
          <Svg w={36} h={14} vb="-8 0 36 14" smooth><path d="M1 5h2.500l4-4v12l-4-4H1zM10 5l4.500 4.500M14.500 5L10 9.500" stroke="#fff" /></Svg>
          <Svg w={13} h={14} smooth><path d="M1 13A12 12 0 0 1 13 1M4 13a9 9 0 0 1 9-8M7 13a6 6 0 0 1 6-5" stroke="#ddd" /><path d="M9 13l4-3v3z" fill="#fff" /></Svg>
          <Lang>ENG</Lang>
          <Clock>8:26 PM<br />2019-03-14</Clock>
          <Notes><Svg w={17} h={17} smooth><path d="M0 1h16v11H8l-3 3v-3H0z" fill="#fff" /><path d="M3 4h10M3 6.500h10M3 9h6" stroke="#333" /><circle cx="12.500" cy="12" r="3.500" fill="#333" stroke="#fff" /></Svg></Notes>
          <PeekEdge />
        </Tray>
      </Taskbar>
    </Screen>
  );
}
